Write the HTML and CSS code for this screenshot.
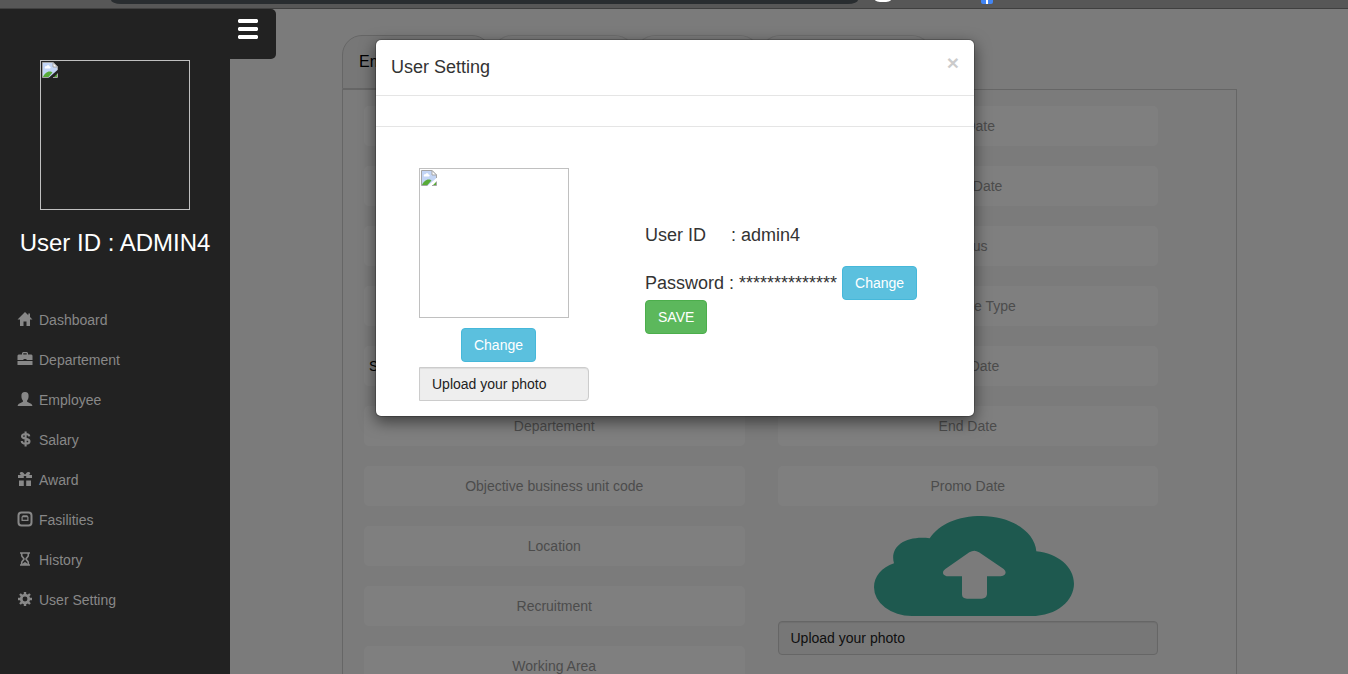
FILE: index.html
```html
<!DOCTYPE html>
<html lang="en">
<head>
<meta charset="utf-8">
<meta name="viewport" content="width=device-width, initial-scale=1">
<title>User Setting</title>
<link rel="stylesheet" href="styles.css">
</head>
<body>
<svg class="defs" aria-hidden="true">
  <symbol id="broken" viewBox="0 0 16 16">
    <path fill="#c3d5f5" d="M.5.5H11L15.500 5v3L7 15.500H.5z"/>
    <path fill="#fff" d="M3 6.500C2 4.500 4 4 4.500 4.300 5 2.500 7.500 3 7.500 4.500 9 4.500 9 6 8 6.500z"/>
    <path fill="#58ab38" d="M1 15c1-3 4-5.500 6.500-5.500 1.500 0 2.500.5 3 1L6.500 15zM12 15l3-3v3z"/>
    <path fill="none" stroke="#a5a5a5" d="M6.500 15.500H.5V.5H11L15.500 5v3M15.500 11.500v4H11"/>
    <path fill="#fff" stroke="#a5a5a5" d="M11 .5V5h4.500z"/>
  </symbol>
</svg>

<header class="chrome">
  <span class="chrome-address"></span>
  <span class="chrome-star"></span>
  <span class="chrome-badge"></span>
</header>

<div class="page">
  <aside class="sidebar">
    <div class="avatar"><svg class="avatar-icon"><use href="#broken"/></svg></div>
    <h1 class="user-name">User ID : ADMIN4</h1>
    <nav class="menu">
      <a href="#"><svg viewBox="0 0 14 14"><path d="M7 0L-.5 7.500H2V14h3.500V9.500h3V14H12V7.500h2.500L12 5V1.500h-1.700v1.800z"/></svg>Dashboard</a>
      <a href="#"><svg viewBox="0 0 14 14"><path d="M5 0h4l1 1v1.500h3.500l1 1V8H8.500V7h-3v1h-6V3.500l1-1H4V1zM5.300 1.200v1.300h3.400V1.200zM-.5 9h15v4h-15z" fill-rule="evenodd"/></svg>Departement</a>
      <a href="#"><svg viewBox="0 0 14 14"><path d="M7 0c2.600 0 3.700 1.500 3.600 4 0 2-.7 3.500-1.500 4.500v1.200L13.500 12l1 2h-15l1-2 4.400-2.300V8.500C4.100 7.500 3.400 6 3.400 4 3.300 1.500 4.400 0 7 0z"/></svg>Employee</a>
      <a href="#"><svg viewBox="0 0 14 14"><path fill="none" stroke="currentColor" stroke-width="2.100" d="M11.300 4.300C11.100 2.600 9.500 2 7.500 2 5.500 2 4 2.800 4 4.300c0 3.400 7.500 1.800 7.500 5 0 1.700-1.700 2.500-3.800 2.500-2.300 0-3.800-.9-4-2.800M7.600-.5v15"/></svg>Salary</a>
      <a href="#"><svg viewBox="0 0 14 14"><path d="M0 3h3.500C1 2.500 1.500 0 3.500 0 5.500 0 6 2 7 2.500 8 2 8.500 0 10.500 0c2 0 2.500 2.500 0 3H14v3H8.200V4H5.800v2H0zM1 8.500h4.800V14H1zM8.200 8.500H13V14H8.200z"/></svg>Award</a>
      <a href="#"><svg viewBox="0 0 14 14"><rect x=".5" y=".5" width="13" height="13" rx="3" fill="none" stroke="currentColor" stroke-width="2"/><path fill-rule="evenodd" d="M3.500 5l1.300-1.800h4.400L10.500 5v4h-7zM4.700 5.300v2.400h4.600V5.300z"/></svg>Fasilities</a>
      <a href="#"><svg viewBox="0 0 14 14"><path fill="none" stroke="currentColor" stroke-width="1.600" d="M2 1h10M2 13h10M3.700 1v2.500C3.700 5 6 6 6 7s-2.300 2-2.300 3.500V13M10.300 1v2.500C10.300 5 8 6 8 7s2.300 2 2.300 3.500V13"/><path d="M4 13c0-2 2-2 3-3 1 1 3 1 3 3z"/></svg>History</a>
      <a href="#"><svg viewBox="0 0 14 14"><circle cx="7" cy="7" r="3.800" fill="none" stroke="currentColor" stroke-width="2.700"/><path stroke="currentColor" stroke-width="2.400" d="M7 0v2.500M7 11.500V14M0 7h2.500M11.500 7H14M2 2l2 2M10 10l2 2M12 2l-2 2M4 10l-2 2"/></svg>User Setting</a>
    </nav>
    <button class="toggle" type="button" aria-label="Toggle menu">
      <svg viewBox="0 0 20 20"><path d="M1 0h18l1 1v2l-1 1H1L0 3V1zM1 8h18l1 1v2l-1 1H1l-1-1V9zM1 16h18l1 1v2l-1 1H1l-1-1v-2z"/></svg>
    </button>
  </aside>

  <main class="content">
    <div class="tabs">
      <button class="tab tab-active" type="button">Employee</button>
      <button class="tab" type="button">Personal</button>
      <button class="tab" type="button">Family</button>
      <button class="tab" type="button">Experience</button>
    </div>
    <form class="panel">
      <div class="column">
        <input class="field" placeholder="Employee ID" aria-label="Employee ID">
        <input class="field" placeholder="Name" aria-label="Name">
        <input class="field" placeholder="Position" aria-label="Position">
        <input class="field" placeholder="Grade" aria-label="Grade">
        <select class="field field-select" aria-label="Section"><option>Section</option></select>
        <input class="field" placeholder="Departement" aria-label="Departement">
        <input class="field" placeholder="Objective business unit code" aria-label="Objective business unit code">
        <input class="field" placeholder="Location" aria-label="Location">
        <input class="field" placeholder="Recruitment" aria-label="Recruitment">
        <input class="field" placeholder="Working Area" aria-label="Working Area">
      </div>
      <div class="column">
        <input class="field" placeholder="Set Date" aria-label="Set Date">
        <input class="field" placeholder="Begin Date" aria-label="Begin Date">
        <input class="field" placeholder="Status" aria-label="Status">
        <input class="field" placeholder="Employee Type" aria-label="Employee Type">
        <input class="field" placeholder="Start Date" aria-label="Start Date">
        <input class="field" placeholder="End Date" aria-label="End Date">
        <input class="field" placeholder="Promo Date" aria-label="Promo Date">
        <div class="upload">
          <svg class="cloud" viewBox="39 48 600 300"><path fill-rule="evenodd" d="M152 348A113 86 0 0 1 39 262C39 230 62 202 99 190 85 142 130 106 206 115 235 72 290 48 362 48 450 48 522 95 526 154 590 160 639 200 639 251 639 300 590 348 510 348zM340 152Q333 152 325 157L253 207C240 217 246 229 265 229H303V283Q303 296 318 296H362Q376 296 378 283V229H415C432 229 440 218 428 207L354 157Q346 152 340 152z"/></svg>
          <input class="file-name" value="Upload your photo" aria-label="Photo" readonly>
        </div>
      </div>
    </form>
  </main>

  <div class="backdrop">
    <section class="modal" role="dialog" aria-labelledby="modal-title">
      <header class="modal-header">
        <h2 id="modal-title">User Setting</h2>
        <button class="close" type="button" aria-label="Close">×</button>
      </header>
      <div class="modal-strip"></div>
      <div class="modal-body">
        <div class="photo">
          <div class="avatar"><svg class="avatar-icon"><use href="#broken"/></svg></div>
          <button class="btn btn-info" type="button">Change</button>
          <input class="file-name file-name-left" value="Upload your photo" aria-label="Profile photo" readonly>
        </div>
        <div class="account">
          <p class="line"><span class="label">User ID</span>: admin4</p>
          <p class="line line-password"><span>Password : **************</span><button class="btn btn-info" type="button">Change</button></p>
          <button class="btn btn-success" type="button">SAVE</button>
        </div>
      </div>
    </section>
  </div>
</div>
</body>
</html>
```
FILE: styles.css
```css
* { box-sizing: border-box; }

body {
  display: flex;
  flex-direction: column;
  height: 100vh;
  margin: 0;
  overflow: hidden;
  background: #f7f7f7;
  color: #333;
  font: 14px/20px "Liberation Sans", Arial, sans-serif;
}

button, input, select { font: inherit; }
h1, h2, p { margin: 0; font-weight: 400; }
.defs { position: absolute; width: 0; height: 0; }

.chrome {
  display: flex;
  flex: none;
  height: 9px;
  padding-left: 111px;
  background: #575757;
  border-bottom: 1px solid #404040;
}
.chrome-address {
  width: 747px;
  height: 4px;
  background: #292d30;
  border-radius: 0 0 10px 10px / 0 0 4px 4px;
}
.chrome-star {
  width: 16px;
  height: 2px;
  margin-left: 17px;
  background: #fff;
  border-radius: 0 0 8px 8px / 0 0 2px 2px;
}
.chrome-badge {
  width: 12px;
  height: 4px;
  margin-left: 90px;
  background: linear-gradient(90deg, #4285f4 5px, #fff 5px, #fff 7px, #4285f4 7px);
  border-radius: 0 0 2px 2px;
}

.page {
  position: relative;
  display: flex;
  flex: 1;
  min-height: 0;
}

.sidebar {
  position: relative;
  z-index: 2;
  flex: none;
  width: 230px;
  padding-top: 51px;
  background: #222;
}
.avatar {
  width: 150px;
  height: 150px;
  padding: 1px;
  border: 1px solid silver;
}
.avatar-icon { display: block; width: 16px; height: 16px; }
.sidebar .avatar { margin: 0 auto; }
.user-name {
  margin: 20px 0 44px;
  color: #fff;
  font-size: 24px;
  line-height: 26px;
  text-align: center;
}
.menu a {
  display: flex;
  align-items: center;
  gap: 7px;
  height: 40px;
  padding-left: 18px;
  color: #888;
  text-decoration: none;
}
.menu svg {
  width: 14px;
  height: 14px;
  margin-bottom: 2px;
  overflow: visible;
  fill: currentColor;
}
.toggle {
  display: flex;
  align-items: flex-start;
  position: absolute;
  top: 0;
  left: 100%;
  width: 46px;
  height: 50px;
  padding: 10px 8px;
  background: #222;
  border: 0;
  border-radius: 0 5px 5px 0;
}
.toggle svg { width: 20px; height: 20px; fill: #fff; }

.content { flex: 1; padding: 26px 10% 0; }
.content { padding: 26px 111px 0 112px; }
.tabs { display: flex; }
.tab {
  height: 54px;
  padding: 0 16px;
  background: transparent;
  border: 1px solid #ddd;
  border-bottom: 0;
  border-radius: 20px 20px 0 0;
  color: #000;
  font-size: 16px;
  text-align: left;
}
.tab-active {
  width: 150px;
  background: #eee;
  border-color: #ccc;
  border-bottom: 1px solid #ccc;
}
.tab:nth-child(2) { width: 143px; }
.tab:nth-child(3) { width: 125px; }
.tab:nth-child(4) { width: 172px; }

.panel {
  display: flex;
  gap: 33px;
  padding: 16px 78px 20px 21px;
  border: 1px solid #ccc;
}
.column {
  display: flex;
  flex: 1;
  flex-direction: column;
  gap: 20px;
  min-width: 0;
}
.field {
  flex: none;
  width: 100%;
  height: 40px;
  background: #fff;
  border: 0;
  border-radius: 5px;
  text-align: center;
}
.field::placeholder { color: #999; opacity: 1; }
.field-select { appearance: none; padding: 0 5px; color: #000; text-align: left; }
.upload {
  display: flex;
  flex-direction: column;
  align-items: center;
  gap: 5px;
  margin-top: -10px;
}
.cloud { width: 200px; height: 100px; margin-left: 12px; fill: #3db39f; }
.file-name {
  width: 100%;
  height: 34px;
  padding: 6px 12px;
  background: #eee;
  border: 1px solid #ccc;
  border-radius: 4px;
  box-shadow: inset 0 1px 1px rgba(0, 0, 0, .075);
  color: #222;
}
.file-name-left { border-radius: 0 4px 4px 0; }

.backdrop {
  position: absolute;
  inset: 0;
  z-index: 1;
  padding: 30px 0 0 2px;
  background: rgba(0, 0, 0, .5);
}
.modal {
  max-width: 600px;
  margin: 0 auto;
  background: #fff;
  background-clip: padding-box;
  border: 1px solid rgba(0, 0, 0, .2);
  border-radius: 6px;
  box-shadow: 0 5px 15px rgba(0, 0, 0, .5);
}
.modal-header {
  display: flex;
  justify-content: space-between;
  align-items: flex-start;
  padding: 14px 15px 15px;
  border-bottom: 1px solid #e5e5e5;
}
.modal-header h2 { font-size: 18px; line-height: 26px; }
.close {
  padding: 0;
  background: none;
  border: 0;
  color: #000;
  font-size: 21px;
  font-weight: 700;
  line-height: 18px;
  opacity: .2;
}
.modal-strip { height: 31px; border-bottom: 1px solid #e5e5e5; }
.modal-body {
  display: flex;
  gap: 56px;
  padding: 41px 42px 15px 43px;
}
.photo { display: flex; flex-direction: column; width: 170px; }
.photo .btn { align-self: center; margin: 10px 11px 5px 0; }
.account { padding-top: 54px; font-size: 18px; }
.line { display: flex; align-items: center; line-height: 26px; }
.line-password { gap: 5px; height: 34px; margin-top: 18px; }
.label { width: 86px; }
.btn {
  height: 34px;
  padding: 6px 12px;
  border: 1px solid;
  border-radius: 4px;
  color: #fff;
  font-size: 14px;
  line-height: 20px;
}
.btn-info { background: #5bc0de; border-color: #46b8da; }
.btn-success { background: #5cb85c; border-color: #4cae4c; }
```
